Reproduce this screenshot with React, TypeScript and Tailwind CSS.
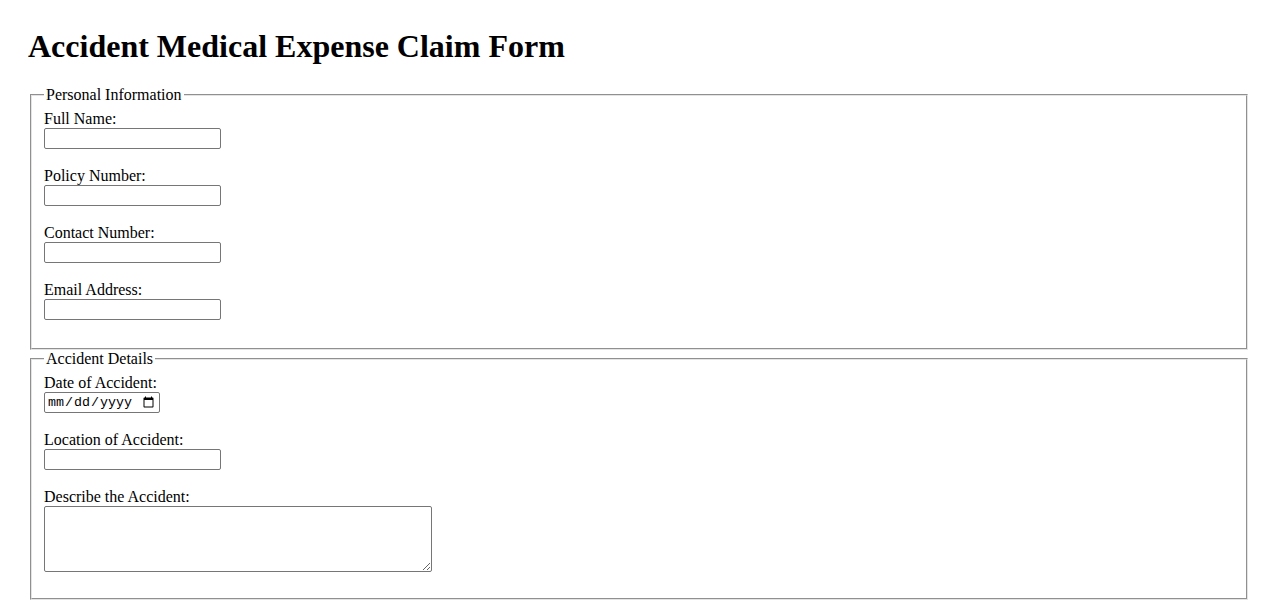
import React from "react";

const inputCls =
  "block w-[177px] h-[21px] border border-[#767676] rounded-[2px] px-[2px] py-[1px] bg-white text-[13.33px] font-['Liberation_Sans',Arial,sans-serif]";

function Field({ label, children, last }: { label: string; children: React.ReactNode; last?: boolean }) {
  return (
    <div className={last ? "mb-[16px]" : "mb-[18px]"}>
      <label className="block h-[18px] leading-[18px] text-[16px]">{label}</label>
      {children}
    </div>
  );
}

const fsCls =
  "mx-[2px] border-2 [border-style:groove] border-[#e4e4e4] px-[12px] pt-[6px] pb-[10px]";

export default function App() {
  return (
    <div className="min-h-screen bg-white text-black font-['Liberation_Serif','Times_New_Roman',serif] px-[28px] pt-[28px]">
      <h1 className="text-[32px] leading-[37px] font-bold mb-[21px]">Accident Medical Expense Claim Form</h1>
      <fieldset className={fsCls}>
        <legend className="px-[2px] text-[16px] leading-[18px]">Personal Information</legend>
        <Field label="Full Name:">
          <input type="text" className={inputCls} />
        </Field>
        <Field label="Policy Number:">
          <input type="text" className={inputCls} />
        </Field>
        <Field label="Contact Number:">
          <input type="text" className={inputCls} />
        </Field>
        <Field label="Email Address:">
          <input type="email" className={inputCls} />
        </Field>
      </fieldset>
      <fieldset className={fsCls}>
        <legend className="px-[2px] text-[16px] leading-[18px]">Accident Details</legend>
        <Field label="Date of Accident:">
          <input
            type="date"
            className="block w-[116px] h-[21px] border border-[#767676] rounded-[2px] px-[2px] py-0 bg-white text-[13.33px] font-['Liberation_Mono','Courier_New',monospace]"
          />
        </Field>
        <Field label="Location of Accident:">
          <input type="text" className={inputCls} />
        </Field>
        <Field label="Describe the Accident:" last>
          <textarea className="block w-[388px] h-[66px] border border-[#767676] rounded-[2px] px-[2px] py-[2px] bg-white text-[13.33px] font-['Liberation_Mono','Courier_New',monospace]" />
        </Field>
      </fieldset>
    </div>
  );
}
